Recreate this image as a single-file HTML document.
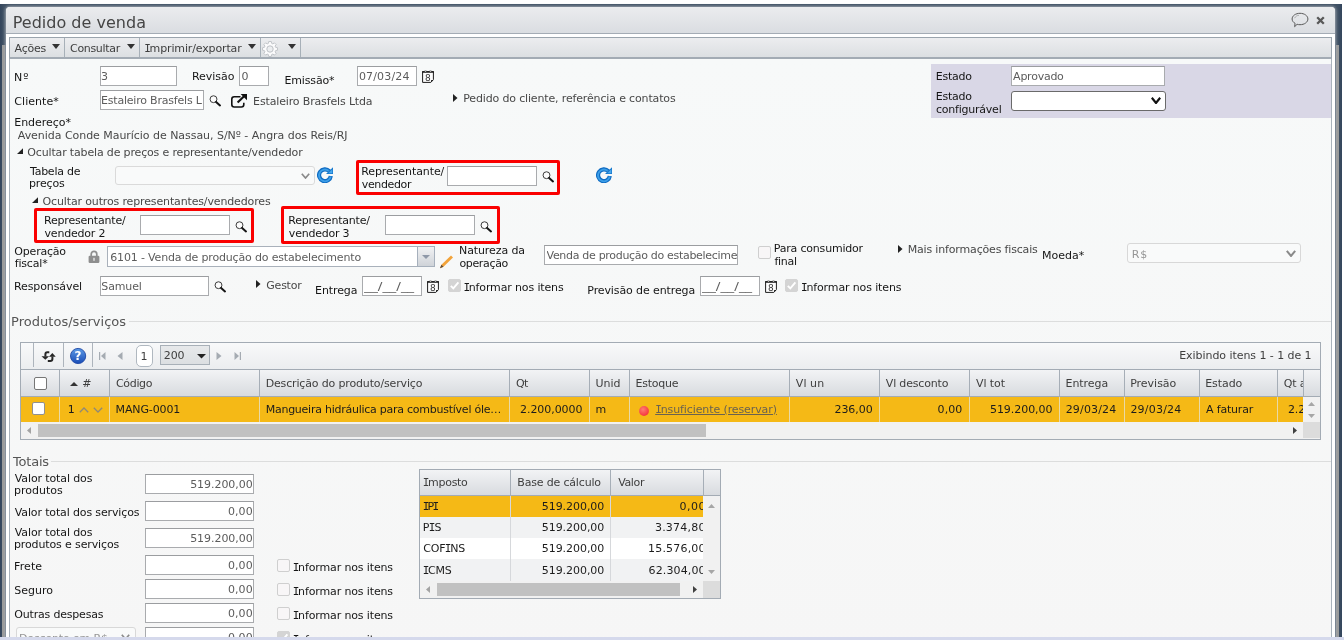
<!DOCTYPE html>
<html lang="pt-BR"><head><meta charset="utf-8"><title>Pedido de venda</title>
<style>
html,body{margin:0;padding:0}
body{width:1344px;height:640px;overflow:hidden;background:#fff;position:relative;font-family:"DejaVu Sans","Liberation Sans",sans-serif;font-size:11px;color:#111}
.abs,.l,.v,.i,.ic,.cb,.h,.c,.g,.sec,.ttl{position:absolute}
.l,.v,.h,.c,.g{white-space:nowrap;line-height:13px}
.l{color:#161616}.v{color:#484848}.h{color:#3e3e3e}.c{color:#1c1c1c}.g{color:#5c5c5c}
.i{background:#fff;border:1px solid #a9abae;border-top-color:#9b9da0}
.cb{border:1px solid #767676;border-radius:2px;background:#fff}
.sec{font-size:13px;line-height:16px;color:#555;white-space:nowrap}
.ttl{font-size:16px;line-height:20px;color:#454545;white-space:nowrap}
.ln{position:absolute;height:1px;background:#dcdddd}
.red{position:absolute;border:3px solid #fa0000;border-radius:2px}
.vs{position:absolute;width:1px}
.I{font-family:"DejaVu Sans Mono",monospace;margin:0 -1.1px 0 -1px}
</style></head><body><div id="root" style="position:absolute;left:0;top:0;width:1344px;height:640px;overflow:hidden;will-change:transform">

<div class="abs" style="left:0px;top:4px;width:1342px;height:633px;background:linear-gradient(90deg,#33455c,#3f5064 4px,#3f5064 1338px,#33455c)"></div>
<div class="abs" style="left:2px;top:45px;width:3px;height:592px;background:#9a9a9a"></div>
<div class="abs" style="left:5px;top:45px;width:1px;height:592px;background:#5b6b7b"></div>
<div class="abs" style="left:1336px;top:45px;width:3px;height:592px;background:#9a9a9a"></div>
<div class="abs" style="left:6px;top:7px;width:1329px;height:640px;background:#fff;border-radius:4px 4px 0 0;box-shadow:0 0 3px 1px rgba(165,172,180,.9)"></div>
<div class="abs" style="left:6px;top:7px;width:1329px;height:26px;border-radius:4px 4px 0 0;background:linear-gradient(#ebecee,#dadde1);border-bottom:1px solid #a4acb5"></div>
<div class="ttl" style="left:12.69px;top:13.00px;letter-spacing:0.015px;">Pedido de venda</div>
<svg class="ic" style="left:1291px;top:12px" width="18" height="16" viewBox="0 0 18 16"><path d="M9 1.300c4.400 0 7.900 2.500 7.900 5.700s-3.500 5.700-7.900 5.700c-1 0-2-0.100-2.900-0.400l-2.500 2.400 0.500-3.300c-1.800-1-3-2.600-3-4.400 0-3.200 3.500-5.700 7.900-5.700z" fill="none" stroke="#5a5a5a" stroke-width="1"/><path d="M3.600 6.200C4.400 4.300 6.200 3.400 8 3.300" fill="none" stroke="#8a8a8a" stroke-width="0.600"/></svg>
<svg class="ic" style="left:1316px;top:16px" width="9" height="9" viewBox="0 0 9 9"><path d="M1.200 1.200L7.800 7.800M7.800 1.200L1.200 7.800" stroke="#585858" stroke-width="2.300"/></svg>
<div class="abs" style="left:9px;top:37px;width:1321px;height:19px;border:1px solid #9aa4ad;border-bottom:2px solid #a3abb4;background:linear-gradient(#ecedef,#dcdfe2)"></div>
<div class="vs" style="left:64px;top:38px;height:19px;background:#a7b0b8"></div>
<div class="vs" style="left:139px;top:38px;height:19px;background:#a7b0b8"></div>
<div class="vs" style="left:260px;top:38px;height:19px;background:#a7b0b8"></div>
<div class="vs" style="left:300px;top:38px;height:19px;background:#a7b0b8"></div>
<div class="h" style="left:14.62px;top:41.69px;letter-spacing:-0.230px;">Ações</div>
<div class="h" style="left:70.06px;top:41.69px;letter-spacing:-0.322px;">Consultar</div>
<div class="h" style="left:145.20px;top:41.69px;letter-spacing:-0.138px;"><span class="I">I</span>mprimir/exportar</div>
<svg class="ic" style="left:52px;top:44px" width="8" height="5" viewBox="0 0 8 5"><path d="M0 0h8L4.0 5z" fill="#333"/></svg>
<svg class="ic" style="left:127px;top:44px" width="8" height="5" viewBox="0 0 8 5"><path d="M0 0h8L4.0 5z" fill="#333"/></svg>
<svg class="ic" style="left:248px;top:44px" width="8" height="5" viewBox="0 0 8 5"><path d="M0 0h8L4.0 5z" fill="#333"/></svg>
<svg class="ic" style="left:288px;top:44px" width="8" height="5" viewBox="0 0 8 5"><path d="M0 0h8L4.0 5z" fill="#333"/></svg>
<svg class="ic" style="left:262px;top:41px" width="16" height="16" viewBox="0 0 16 16"><g fill="#fbfbfc" stroke="#b9bcc1" stroke-width="0.900"><path d="M6.700 0.800h2.600l0.400 2 1.300 0.600 1.700-1.100 1.800 1.800-1.100 1.700 0.600 1.300 2 0.400v2.600l-2 0.400-0.600 1.300 1.100 1.700-1.800 1.800-1.700-1.100-1.300 0.600-0.400 2h-2.600l-0.400-2-1.300-0.600-1.700 1.100-1.800-1.800 1.100-1.700-0.600-1.300-2-0.400v-2.600l2-0.400 0.600-1.300-1.100-1.700 1.800-1.800 1.700 1.100 1.300-0.600z" transform="translate(0.500 -0.300) scale(0.940)"/><circle cx="8" cy="8" r="3.200" fill="#eceef0"/></g></svg>
<div class="abs" style="left:9px;top:59px;width:1321px;height:590px;border-left:1px solid #a9b2bb;border-right:1px solid #a9b2bb;background:linear-gradient(#f7f9f9,#f6f6f6)"></div>
<div class="l" style="left:14.00px;top:70.69px;letter-spacing:1.096px;">Nº</div>
<div class="i" style="left:100px;top:66px;width:75px;height:18px;"></div>
<div class="g" style="left:101.02px;top:69.69px;letter-spacing:-0.150px;max-width:74.98px;overflow:hidden;">3</div>
<div class="l" style="left:192.00px;top:69.69px;letter-spacing:-0.033px;">Revisão</div>
<div class="i" style="left:239px;top:66px;width:28px;height:18px;"></div>
<div class="g" style="left:241.58px;top:69.69px;letter-spacing:-0.150px;max-width:26.42px;overflow:hidden;">0</div>
<div class="l" style="left:284.50px;top:73.69px;letter-spacing:-0.153px;">Emissão*</div>
<div class="i" style="left:357px;top:66px;width:58px;height:18px;"></div>
<div class="g" style="left:358.97px;top:69.69px;letter-spacing:0.147px;max-width:57.03px;overflow:hidden;">07/03/24</div>
<svg class="ic" style="left:422px;top:70px" width="12" height="13" viewBox="0 0 12 13"><path d="M0.600 1.700H11.400V9.600L8.800 12.400H0.600z" fill="#fdfdfd" stroke="#1c1c1c" stroke-width="1"/><rect x="0.100" y="1.200" width="11.800" height="1.500" fill="#1c1c1c"/><circle cx="3.500" cy="1.100" r="0.850" fill="#fff" stroke="#1c1c1c" stroke-width="0.350"/><circle cx="8.500" cy="1.100" r="0.850" fill="#fff" stroke="#1c1c1c" stroke-width="0.350"/><path d="M11.400 9.900H9.100V12.200z" fill="#1c1c1c"/><text x="5.900" y="10.700" font-size="9" text-anchor="middle" font-family="DejaVu Sans,sans-serif" fill="#333">8</text></svg>
<div class="l" style="left:14.36px;top:94.69px;letter-spacing:0.033px;">Cliente*</div>
<div class="i" style="left:100px;top:90px;width:102px;height:18px;"></div>
<div class="g" style="left:101.00px;top:93.69px;letter-spacing:-0.203px;max-width:101.20px;overflow:hidden;">Estaleiro Brasfels Ltda</div>
<svg class="ic" style="left:209.4px;top:95.1px" width="13" height="12" viewBox="0 0 13 12"><circle cx="4.500" cy="4.200" r="3.450" fill="#fcfcfc" stroke="#3a3a3a" stroke-width="1"/><path d="M7.100 6.900L11 10.400" stroke="#151515" stroke-width="2" stroke-linecap="round"/></svg>
<svg class="ic" style="left:230px;top:93px" width="18" height="15" viewBox="0 0 18 15"><path d="M10.500 3.800H4.200a2.400 2.400 0 0 0-2.400 2.400v5.400a2.400 2.400 0 0 0 2.400 2.400h7.200a2.400 2.400 0 0 0 2.400-2.400V9.800" fill="none" stroke="#111" stroke-width="1.600"/><path d="M7.600 9.400L14.800 2.400" stroke="#111" stroke-width="2.100"/><path d="M10.600 0.900h6.400v6.400z" fill="#111"/></svg>
<div class="v" style="left:253.10px;top:94.69px;letter-spacing:-0.147px;">Estaleiro Brasfels Ltda</div>
<svg class="ic" style="left:453px;top:94px" width="5" height="8" viewBox="0 0 5 8"><path d="M0 0L4.500 4L0 8z" fill="#222"/></svg>
<div class="v" style="left:463.20px;top:91.69px;letter-spacing:-0.151px;">Pedido do cliente, referência e contatos</div>
<div class="abs" style="left:931px;top:64px;width:400px;height:54px;background:#d9d7e6"></div>
<div class="l" style="left:935.70px;top:69.69px;letter-spacing:-0.223px;">Estado</div>
<div class="i" style="left:1011px;top:66px;width:152px;height:18px;"></div>
<div class="g" style="left:1013.12px;top:69.69px;letter-spacing:-0.248px;max-width:150.88px;overflow:hidden;">Aprovado</div>
<div class="l" style="left:935.70px;top:89.69px;letter-spacing:-0.223px;">Estado</div>
<div class="l" style="left:936.07px;top:102.69px;letter-spacing:-0.236px;">configurável</div>
<div class="abs" style="left:1011px;top:91px;width:153px;height:18px;border:1px solid #6a6a6a;border-radius:3px;background:#fff"></div>
<svg class="ic" style="left:1151px;top:97px" width="10" height="7" viewBox="0 0 10 7"><path d="M0.800 0.800L5.0 6L9.2 0.800" fill="none" stroke="#111" stroke-width="2.2"/></svg>
<div class="l" style="left:14.20px;top:115.69px;letter-spacing:-0.012px;">Endereço*</div>
<div class="v" style="left:17.82px;top:128.69px;letter-spacing:-0.041px;">Avenida Conde Maurício de Nassau, S/Nº - Angra dos Reis/RJ</div>
<svg class="ic" style="left:17px;top:148.1px" width="6.3" height="6" viewBox="0 0 6.3 6"><path d="M6.300 0V6H0z" fill="#222"/></svg>
<div class="v" style="left:27.35px;top:145.69px;letter-spacing:-0.161px;">Ocultar tabela de preços e representante/vendedor</div>
<div class="l" style="left:30.00px;top:164.69px;letter-spacing:-0.250px;">Tabela de</div>
<div class="l" style="left:29.00px;top:176.69px;letter-spacing:-0.150px;">preços</div>
<div class="abs" style="left:115px;top:166px;width:198px;height:17px;border:1px solid #dadada;border-radius:3px;background:#f9fafa"></div>
<svg class="ic" style="left:301px;top:173px" width="9" height="6" viewBox="0 0 9 6"><path d="M0.800 0.800L4.5 5L8.2 0.800" fill="none" stroke="#8a8a8a" stroke-width="1.7"/></svg>
<svg class="ic" style="left:317px;top:167px" width="16" height="16" viewBox="0 0 16 16"><path d="M13.840 9.020A5.900 5.900 0 1 1 12.300 4.150" fill="none" stroke="#0f6cc3" stroke-width="4.200"/><path d="M13.700 9.500A5.900 5.900 0 1 1 11.600 3.800" fill="none" stroke="#3d9fe8" stroke-width="1.800"/><path d="M16 0.200V6.900H9z" fill="#1577cc"/><path d="M15.300 2.200V6.200H11.200z" fill="#49a8ec"/></svg>
<div class="red" style="left:356px;top:160px;width:198px;height:29px"></div>
<div class="l" style="left:361.20px;top:164.69px;letter-spacing:-0.088px;">Representante/</div>
<div class="l" style="left:361.76px;top:177.69px;letter-spacing:-0.364px;">vendedor</div>
<div class="i" style="left:447px;top:166px;width:88px;height:18px;"></div>
<svg class="ic" style="left:542.4px;top:171.2px" width="13" height="12" viewBox="0 0 13 12"><circle cx="4.500" cy="4.200" r="3.450" fill="#fcfcfc" stroke="#3a3a3a" stroke-width="1"/><path d="M7.100 6.900L11 10.400" stroke="#151515" stroke-width="2" stroke-linecap="round"/></svg>
<svg class="ic" style="left:596px;top:167px" width="16" height="16" viewBox="0 0 16 16"><path d="M13.840 9.020A5.900 5.900 0 1 1 12.300 4.150" fill="none" stroke="#0f6cc3" stroke-width="4.200"/><path d="M13.700 9.500A5.900 5.900 0 1 1 11.600 3.800" fill="none" stroke="#3d9fe8" stroke-width="1.800"/><path d="M16 0.200V6.900H9z" fill="#1577cc"/><path d="M15.300 2.200V6.200H11.200z" fill="#49a8ec"/></svg>
<svg class="ic" style="left:31.9px;top:197.4px" width="6.3" height="6" viewBox="0 0 6.3 6"><path d="M6.300 0V6H0z" fill="#222"/></svg>
<div class="v" style="left:42.55px;top:194.69px;letter-spacing:-0.142px;">Ocultar outros representantes/vendedores</div>
<div class="red" style="left:34px;top:208px;width:214px;height:29px"></div>
<div class="l" style="left:44.00px;top:213.69px;letter-spacing:-0.195px;">Representante/</div>
<div class="l" style="left:44.56px;top:226.69px;letter-spacing:-0.200px;">vendedor 2</div>
<div class="i" style="left:140px;top:215px;width:88px;height:18px;"></div>
<svg class="ic" style="left:235.4px;top:220.6px" width="13" height="12" viewBox="0 0 13 12"><circle cx="4.500" cy="4.200" r="3.450" fill="#fcfcfc" stroke="#3a3a3a" stroke-width="1"/><path d="M7.100 6.900L11 10.400" stroke="#151515" stroke-width="2" stroke-linecap="round"/></svg>
<div class="red" style="left:281px;top:206px;width:213px;height:32px"></div>
<div class="l" style="left:288.30px;top:213.69px;letter-spacing:-0.195px;">Representante/</div>
<div class="l" style="left:288.86px;top:226.69px;letter-spacing:-0.223px;">vendedor 3</div>
<div class="i" style="left:385px;top:215px;width:88px;height:18px;"></div>
<svg class="ic" style="left:480.4px;top:220.5px" width="13" height="12" viewBox="0 0 13 12"><circle cx="4.500" cy="4.200" r="3.450" fill="#fcfcfc" stroke="#3a3a3a" stroke-width="1"/><path d="M7.100 6.900L11 10.400" stroke="#151515" stroke-width="2" stroke-linecap="round"/></svg>
<div class="l" style="left:14.36px;top:244.69px;letter-spacing:-0.214px;">Operação</div>
<div class="l" style="left:14.66px;top:256.69px;letter-spacing:-0.150px;">fiscal*</div>
<svg class="ic" style="left:88px;top:250px" width="12" height="13" viewBox="0 0 12 13"><path d="M3.200 6V4.200a2.800 2.800 0 0 1 5.600 0V6" fill="none" stroke="#8e8e8e" stroke-width="1.700"/><rect x="0.600" y="5.800" width="10.800" height="7.200" rx="1.200" fill="#8e8e8e"/><rect x="5.300" y="7.800" width="1.400" height="3" fill="#e6e6e6"/></svg>
<div class="i" style="left:107px;top:246px;width:326px;height:19px;border-color:#a9b1bb"></div>
<div class="g" style="left:110.21px;top:250.69px;letter-spacing:-0.162px;">6101 - Venda de produção do estabelecimento</div>
<div class="abs" style="left:417px;top:246px;width:16px;height:19px;border:1px solid #a6b0bc;background:linear-gradient(#f1f2f4,#cfd3d8)"></div>
<svg class="ic" style="left:422px;top:255.2px" width="8" height="4" viewBox="0 0 8 4"><path d="M0 0h8L4.0 4z" fill="#8e98a8"/></svg>
<svg class="ic" style="left:439px;top:254px" width="15" height="15" viewBox="0 0 15 15"><path d="M1 14.200L2.400 10.700L12 1.500L14 3.500L4.500 12.800z" fill="#f2a33a"/><path d="M1 14.200L2.400 10.700L4.500 12.800z" fill="#5a4a3a"/></svg>
<div class="l" style="left:459.00px;top:243.69px;letter-spacing:-0.100px;">Natureza da</div>
<div class="l" style="left:459.38px;top:256.69px;letter-spacing:-0.332px;">operação</div>
<div class="i" style="left:544px;top:245px;width:192px;height:18px;"></div>
<div class="g" style="left:546.52px;top:248.69px;letter-spacing:-0.307px;max-width:190.48px;overflow:hidden;">Venda de produção do estabelecimento</div>
<div class="cb" style="left:758px;top:246px;width:11px;height:11px;background:#f8f6f7;border-color:#cfcfcf"></div>
<div class="l" style="left:773.80px;top:241.69px;letter-spacing:-0.199px;">Para consumidor</div>
<div class="l" style="left:774.45px;top:254.69px;letter-spacing:-0.285px;">final</div>
<svg class="ic" style="left:898px;top:245px" width="5" height="8" viewBox="0 0 5 8"><path d="M0 0L4.500 4L0 8z" fill="#222"/></svg>
<div class="v" style="left:907.70px;top:242.69px;letter-spacing:-0.166px;">Mais informações fiscais</div>
<div class="l" style="left:1041.90px;top:248.69px;letter-spacing:0.046px;">Moeda*</div>
<div class="abs" style="left:1127px;top:243px;width:172px;height:18px;border:1px solid #d8d8d8;border-radius:3px;background:#f9fafa"></div>
<div class="v" style="left:1131.80px;top:247.69px;letter-spacing:0.788px;color:#969696">R$</div>
<svg class="ic" style="left:1286px;top:250px" width="10" height="7" viewBox="0 0 10 7"><path d="M0.800 0.800L5.0 6L9.2 0.800" fill="none" stroke="#8a8a8a" stroke-width="2"/></svg>
<div class="l" style="left:14.00px;top:279.69px;letter-spacing:-0.100px;">Responsável</div>
<div class="i" style="left:100px;top:276px;width:107px;height:18px;"></div>
<div class="g" style="left:101.37px;top:279.69px;letter-spacing:-0.150px;max-width:106.63px;overflow:hidden;">Samuel</div>
<svg class="ic" style="left:214.3px;top:281.2px" width="13" height="12" viewBox="0 0 13 12"><circle cx="4.500" cy="4.200" r="3.450" fill="#fcfcfc" stroke="#3a3a3a" stroke-width="1"/><path d="M7.100 6.900L11 10.400" stroke="#151515" stroke-width="2" stroke-linecap="round"/></svg>
<svg class="ic" style="left:255.8px;top:280.1px" width="5" height="8" viewBox="0 0 5 8"><path d="M0 0L4.500 4L0 8z" fill="#222"/></svg>
<div class="v" style="left:266.35px;top:278.69px;letter-spacing:-0.250px;">Gestor</div>
<div class="l" style="left:315.10px;top:283.69px;letter-spacing:-0.117px;">Entrega</div>
<div class="i" style="left:362px;top:276px;width:58px;height:18px;"></div>
<div class="g" style="left:364.20px;top:279.69px;letter-spacing:0.000px;max-width:56.80px;overflow:hidden;transform:scaleX(1.2550);transform-origin:0 0;">__/__/__</div>
<svg class="ic" style="left:427px;top:280px" width="12" height="13" viewBox="0 0 12 13"><path d="M0.600 1.700H11.400V9.600L8.800 12.400H0.600z" fill="#fdfdfd" stroke="#1c1c1c" stroke-width="1"/><rect x="0.100" y="1.200" width="11.800" height="1.500" fill="#1c1c1c"/><circle cx="3.500" cy="1.100" r="0.850" fill="#fff" stroke="#1c1c1c" stroke-width="0.350"/><circle cx="8.500" cy="1.100" r="0.850" fill="#fff" stroke="#1c1c1c" stroke-width="0.350"/><path d="M11.400 9.900H9.100V12.200z" fill="#1c1c1c"/><text x="5.900" y="10.700" font-size="9" text-anchor="middle" font-family="DejaVu Sans,sans-serif" fill="#333">8</text></svg>
<div class="cb" style="left:448px;top:279px;width:11px;height:11px;background:#d4d4d4;border-color:#d4d4d4"><svg width="13" height="13" viewBox="0 0 12 12" style="position:absolute;left:-1px;top:-1px"><path d="M2.600 6.300L4.900 8.600L9.600 3.200" fill="none" stroke="#fff" stroke-width="1.800"/></svg></div>
<div class="l" style="left:464.40px;top:280.69px;letter-spacing:-0.141px;"><span class="I">I</span>nformar nos itens</div>
<div class="l" style="left:587.30px;top:283.69px;letter-spacing:-0.108px;">Previsão de entrega</div>
<div class="i" style="left:700px;top:276px;width:58px;height:18px;"></div>
<div class="g" style="left:702.20px;top:279.69px;letter-spacing:0.000px;max-width:56.80px;overflow:hidden;transform:scaleX(1.2550);transform-origin:0 0;">__/__/__</div>
<svg class="ic" style="left:765px;top:280px" width="12" height="13" viewBox="0 0 12 13"><path d="M0.600 1.700H11.400V9.600L8.800 12.400H0.600z" fill="#fdfdfd" stroke="#1c1c1c" stroke-width="1"/><rect x="0.100" y="1.200" width="11.800" height="1.500" fill="#1c1c1c"/><circle cx="3.500" cy="1.100" r="0.850" fill="#fff" stroke="#1c1c1c" stroke-width="0.350"/><circle cx="8.500" cy="1.100" r="0.850" fill="#fff" stroke="#1c1c1c" stroke-width="0.350"/><path d="M11.400 9.900H9.100V12.200z" fill="#1c1c1c"/><text x="5.900" y="10.700" font-size="9" text-anchor="middle" font-family="DejaVu Sans,sans-serif" fill="#333">8</text></svg>
<div class="cb" style="left:785px;top:279px;width:11px;height:11px;background:#d4d4d4;border-color:#d4d4d4"><svg width="13" height="13" viewBox="0 0 12 12" style="position:absolute;left:-1px;top:-1px"><path d="M2.600 6.300L4.900 8.600L9.600 3.200" fill="none" stroke="#fff" stroke-width="1.800"/></svg></div>
<div class="l" style="left:802.00px;top:280.69px;letter-spacing:-0.129px;"><span class="I">I</span>nformar nos itens</div>
<div class="sec" style="left:11.03px;top:313.50px;letter-spacing:0.031px;">Produtos/serviços</div>
<div class="ln" style="left:129px;top:321px;width:1202px"></div>
<div class="abs" style="left:20px;top:342px;width:1301px;height:98px;box-sizing:border-box;border:1px solid #a3abb4;background:#f1f1f1"></div>
<div class="abs" style="left:21px;top:343px;width:1299px;height:26px;background:linear-gradient(#f8f9fa,#ebedef)"></div>
<div class="vs" style="left:33px;top:343px;height:24px;background:#adb4bc"></div>
<div class="vs" style="left:63px;top:343px;height:24px;background:#adb4bc"></div>
<div class="vs" style="left:92px;top:343px;height:24px;background:#adb4bc"></div>
<svg class="ic" style="left:40.500px;top:350.500px" width="15" height="11" viewBox="0 0 15 11"><path d="M8.300 1.300H6.300Q4.400 1.300 4.400 3.200V5.600" fill="none" stroke="#262626" stroke-width="2"/><path d="M0.500 5.200H8.100L4.300 8.700z" fill="#262626"/><path d="M6.800 9.900H9.200Q11.400 9.900 11.400 8V5.600" fill="none" stroke="#262626" stroke-width="2"/><path d="M7.900 5.700H14.700L11.400 2.100z" fill="#262626"/></svg>
<svg class="ic" style="left:69px;top:347px" width="18" height="18" viewBox="0 0 18 18"><defs><linearGradient id="hg" x1="0" y1="0" x2="0" y2="1"><stop offset="0" stop-color="#5b9ae6"/><stop offset="1" stop-color="#1a4cb6"/></linearGradient></defs><circle cx="9.100" cy="9" r="7.600" fill="url(#hg)" stroke="#1d47a6" stroke-width="0.900"/><text x="9" y="13.200" font-size="12" font-weight="bold" text-anchor="middle" font-family="DejaVu Sans,sans-serif" fill="#fff">?</text></svg>
<svg class="ic" style="left:99px;top:352px" width="7" height="8" viewBox="0 0 7 8"><path d="M0.600 0v8" stroke="#a5abb2" stroke-width="1.200"/><path d="M6.500 0L2 4L6.500 8z" fill="#a5abb2"/></svg>
<svg class="ic" style="left:117px;top:352px" width="6" height="8" viewBox="0 0 6 8"><path d="M5.500 0L0.500 4L5.500 8z" fill="#a5abb2"/></svg>
<div class="abs" style="left:136px;top:345px;width:15px;height:20px;border:1px solid #b0b8c0;border-radius:5px;background:#fff"></div>
<div class="h" style="left:140.54px;top:349.69px;letter-spacing:-0.150px;">1</div>
<div class="abs" style="left:160px;top:345px;width:48px;height:18px;border:1px solid #a8b0b8;background:linear-gradient(#e7e9eb,#dcdfe2)"></div>
<div class="h" style="left:163.72px;top:348.69px;letter-spacing:-0.085px;">200</div>
<svg class="ic" style="left:196.5px;top:354px" width="9" height="4.5" viewBox="0 0 9 4.5"><path d="M0 0h9L4.5 4.5z" fill="#222"/></svg>
<svg class="ic" style="left:216px;top:352px" width="6" height="8" viewBox="0 0 6 8"><path d="M0.500 0L5.500 4L0.500 8z" fill="#a5abb2"/></svg>
<svg class="ic" style="left:234px;top:352px" width="7" height="8" viewBox="0 0 7 8"><path d="M6.400 0v8" stroke="#a5abb2" stroke-width="1.200"/><path d="M0.500 0L5 4L0.500 8z" fill="#a5abb2"/></svg>
<div class="h" style="left:1179.20px;top:348.69px;letter-spacing:-0.056px;">Exibindo itens 1 - 1 de 1</div>
<div class="abs" style="left:21px;top:369px;width:1299px;height:28px;box-sizing:border-box;background:linear-gradient(#f2f3f5,#d8dbdf);border-top:1px solid #a3abb4;border-bottom:1px solid #a3abb4"></div>
<div class="abs" style="left:21px;top:397px;width:1282px;height:25px;background:#f5b916"></div>
<div class="vs" style="left:59px;top:370px;height:26px;background:#a6aeb7"></div>
<div class="vs" style="left:109px;top:370px;height:26px;background:#a6aeb7"></div>
<div class="vs" style="left:259px;top:370px;height:26px;background:#a6aeb7"></div>
<div class="vs" style="left:509px;top:370px;height:26px;background:#a6aeb7"></div>
<div class="vs" style="left:589px;top:370px;height:26px;background:#a6aeb7"></div>
<div class="vs" style="left:629px;top:370px;height:26px;background:#a6aeb7"></div>
<div class="vs" style="left:789px;top:370px;height:26px;background:#a6aeb7"></div>
<div class="vs" style="left:879px;top:370px;height:26px;background:#a6aeb7"></div>
<div class="vs" style="left:969px;top:370px;height:26px;background:#a6aeb7"></div>
<div class="vs" style="left:1059px;top:370px;height:26px;background:#a6aeb7"></div>
<div class="vs" style="left:1124px;top:370px;height:26px;background:#a6aeb7"></div>
<div class="vs" style="left:1199px;top:370px;height:26px;background:#a6aeb7"></div>
<div class="vs" style="left:1277px;top:370px;height:26px;background:#a6aeb7"></div>
<div class="vs" style="left:1303px;top:370px;height:26px;background:#a6aeb7"></div>
<div class="vs" style="left:59px;top:397px;height:25px;background:#e9d9a6"></div>
<div class="vs" style="left:109px;top:397px;height:25px;background:#e9d9a6"></div>
<div class="vs" style="left:259px;top:397px;height:25px;background:#e9d9a6"></div>
<div class="vs" style="left:509px;top:397px;height:25px;background:#e9d9a6"></div>
<div class="vs" style="left:589px;top:397px;height:25px;background:#e9d9a6"></div>
<div class="vs" style="left:629px;top:397px;height:25px;background:#e9d9a6"></div>
<div class="vs" style="left:789px;top:397px;height:25px;background:#e9d9a6"></div>
<div class="vs" style="left:879px;top:397px;height:25px;background:#e9d9a6"></div>
<div class="vs" style="left:969px;top:397px;height:25px;background:#e9d9a6"></div>
<div class="vs" style="left:1059px;top:397px;height:25px;background:#e9d9a6"></div>
<div class="vs" style="left:1124px;top:397px;height:25px;background:#e9d9a6"></div>
<div class="vs" style="left:1199px;top:397px;height:25px;background:#e9d9a6"></div>
<div class="vs" style="left:1277px;top:397px;height:25px;background:#e9d9a6"></div>
<div class="cb" style="left:34px;top:377px;width:11px;height:11px;background:#fff;border-color:#767676"></div>
<svg class="ic" style="left:70px;top:382px" width="8" height="4" viewBox="0 0 8 4"><path d="M0 4h8L4 0z" fill="#333"/></svg>
<div class="h" style="left:82.28px;top:376.69px;letter-spacing:-0.150px;">#</div>
<div class="h" style="left:115.96px;top:376.69px;letter-spacing:-0.323px;">Código</div>
<div class="h" style="left:265.70px;top:376.69px;letter-spacing:-0.154px;">Descrição do produto/serviço</div>
<div class="h" style="left:516.06px;top:376.69px;letter-spacing:-0.663px;">Qt</div>
<div class="h" style="left:595.50px;top:376.69px;letter-spacing:-0.033px;">Unid</div>
<div class="h" style="left:635.50px;top:376.69px;letter-spacing:-0.233px;">Estoque</div>
<div class="h" style="left:795.82px;top:376.69px;letter-spacing:0.070px;">Vl un</div>
<div class="h" style="left:885.84px;top:376.69px;letter-spacing:-0.178px;">Vl desconto</div>
<div class="h" style="left:976.02px;top:376.69px;letter-spacing:-0.097px;">Vl tot</div>
<div class="h" style="left:1065.50px;top:376.69px;letter-spacing:-0.050px;">Entrega</div>
<div class="h" style="left:1130.20px;top:376.69px;letter-spacing:-0.019px;">Previsão</div>
<div class="h" style="left:1205.20px;top:376.69px;letter-spacing:-0.063px;">Estado</div>
<div class="h" style="left:1283.66px;top:376.69px;letter-spacing:-0.150px;max-width:19.34px;overflow:hidden;">Qt a</div>
<div class="cb" style="left:32px;top:402px;width:11px;height:11px;background:#fff;border-color:#909090"></div>
<div class="c" style="left:67.64px;top:402.69px;letter-spacing:-0.150px;">1</div>
<svg class="ic" style="left:78.500px;top:407px" width="10" height="6" viewBox="0 0 10 6"><path d="M0.800 5.200L5 1L9.200 5.200" fill="none" stroke="#8f8877" stroke-width="1.300"/></svg>
<svg class="ic" style="left:92.500px;top:407px" width="10" height="6" viewBox="0 0 10 6"><path d="M0.800 0.800L5 5L9.200 0.800" fill="none" stroke="#8f8877" stroke-width="1.300"/></svg>
<div class="c" style="left:115.60px;top:402.69px;letter-spacing:-0.131px;">MANG-0001</div>
<div class="c" style="left:265.70px;top:402.69px;letter-spacing:-0.250px;">Mangueira hidráulica para combustível óle…</div>
<div class="c" style="left:520.02px;top:402.69px;letter-spacing:-0.063px;">2.200,0000</div>
<div class="c" style="left:595.50px;top:402.69px;letter-spacing:-0.150px;">m</div>
<svg class="ic" style="left:639px;top:406px" width="10" height="10" viewBox="0 0 10 10"><defs><radialGradient id="rg" cx="0.400" cy="0.350" r="0.700"><stop offset="0" stop-color="#ff7b72"/><stop offset="1" stop-color="#f5333a"/></radialGradient></defs><circle cx="5" cy="5" r="4.900" fill="url(#rg)"/></svg>
<div class="c" style="left:656.20px;top:402.69px;letter-spacing:-0.100px;text-decoration:underline;color:#6a6250;"><span class="I">I</span>nsuficiente (reservar)</div>
<div class="c" style="left:834.42px;top:402.69px;letter-spacing:-0.028px;">236,00</div>
<div class="c" style="left:937.58px;top:402.69px;letter-spacing:0.090px;">0,00</div>
<div class="c" style="left:989.94px;top:402.69px;letter-spacing:-0.044px;">519.200,00</div>
<div class="c" style="left:1065.72px;top:402.69px;letter-spacing:0.154px;">29/03/24</div>
<div class="c" style="left:1130.42px;top:402.69px;letter-spacing:0.211px;">29/03/24</div>
<div class="c" style="left:1206.02px;top:402.69px;letter-spacing:-0.178px;">A faturar</div>
<div class="c" style="left:1288.02px;top:402.69px;letter-spacing:-0.150px;max-width:14.98px;overflow:hidden;">2.200,0000</div>
<div class="abs" style="left:1304px;top:397px;width:16px;height:25px;background:#f1f1f1"></div>
<svg class="ic" style="left:1308px;top:402px" width="7" height="4" viewBox="0 0 7 4"><path d="M0 4h7L3.500 0z" fill="#a6a6a6"/></svg>
<svg class="ic" style="left:1308px;top:414px" width="7" height="4" viewBox="0 0 7 4"><path d="M0 0h7L3.500 4z" fill="#a6a6a6"/></svg>
<div class="abs" style="left:21px;top:422px;width:1282px;height:16px;background:#f1f1f1"></div>
<div class="abs" style="left:1303px;top:422px;width:17px;height:16px;background:#dcdcdc"></div>
<div class="abs" style="left:38px;top:424px;width:668px;height:13px;background:#c1c1c1"></div>
<svg class="ic" style="left:27px;top:427px" width="4" height="7" viewBox="0 0 4 7"><path d="M4 0V7L0 3.500z" fill="#a3a3a3"/></svg>
<svg class="ic" style="left:1293px;top:427px" width="4" height="7" viewBox="0 0 4 7"><path d="M0 0V7L4 3.500z" fill="#404040"/></svg>
<div class="sec" style="left:13.00px;top:453.50px;letter-spacing:-0.203px;">Totais</div>
<div class="ln" style="left:51px;top:461px;width:1280px"></div>
<div class="l" style="left:14.84px;top:471.69px;letter-spacing:-0.125px;">Valor total dos</div>
<div class="l" style="left:14.00px;top:483.69px;letter-spacing:-0.014px;">produtos</div>
<div class="i" style="left:145px;top:474px;width:107px;height:18px;"></div>
<div class="g" style="left:190.14px;top:477.69px;letter-spacing:-0.044px;">519.200,00</div>
<div class="l" style="left:14.84px;top:505.69px;letter-spacing:-0.142px;">Valor total dos serviços</div>
<div class="i" style="left:145px;top:501px;width:107px;height:18px;"></div>
<div class="g" style="left:227.98px;top:504.69px;letter-spacing:0.057px;">0,00</div>
<div class="l" style="left:14.84px;top:525.69px;letter-spacing:-0.125px;">Valor total dos</div>
<div class="l" style="left:14.00px;top:537.69px;letter-spacing:-0.127px;">produtos e serviços</div>
<div class="i" style="left:145px;top:528px;width:107px;height:18px;"></div>
<div class="g" style="left:190.14px;top:531.69px;letter-spacing:-0.044px;">519.200,00</div>
<div class="l" style="left:14.00px;top:559.69px;letter-spacing:0.103px;">Frete</div>
<div class="i" style="left:145px;top:555px;width:107px;height:18px;"></div>
<div class="g" style="left:227.98px;top:558.69px;letter-spacing:0.057px;">0,00</div>
<div class="cb" style="left:277px;top:559px;width:11px;height:11px;background:#f8f6f7;border-color:#cfcfcf"></div>
<div class="l" style="left:293.70px;top:560.69px;letter-spacing:-0.135px;"><span class="I">I</span>nformar nos itens</div>
<div class="l" style="left:14.27px;top:583.69px;letter-spacing:-0.013px;">Seguro</div>
<div class="i" style="left:145px;top:579px;width:107px;height:18px;"></div>
<div class="g" style="left:227.98px;top:582.69px;letter-spacing:0.057px;">0,00</div>
<div class="cb" style="left:277px;top:583px;width:11px;height:11px;background:#f8f6f7;border-color:#cfcfcf"></div>
<div class="l" style="left:293.70px;top:584.69px;letter-spacing:-0.135px;"><span class="I">I</span>nformar nos itens</div>
<div class="l" style="left:14.35px;top:607.69px;letter-spacing:-0.198px;">Outras despesas</div>
<div class="i" style="left:145px;top:603px;width:107px;height:18px;"></div>
<div class="g" style="left:227.98px;top:606.69px;letter-spacing:0.057px;">0,00</div>
<div class="cb" style="left:277px;top:607px;width:11px;height:11px;background:#f8f6f7;border-color:#cfcfcf"></div>
<div class="l" style="left:293.70px;top:608.69px;letter-spacing:-0.135px;"><span class="I">I</span>nformar nos itens</div>
<div class="abs" style="left:16px;top:627px;width:118px;height:18px;border:1px solid #d8d8d8;border-radius:3px;background:#f9fafa"></div>
<div class="v" style="left:19.00px;top:631.69px;letter-spacing:-0.150px;color:#969696;">Desconto em R$</div>
<svg class="ic" style="left:121px;top:634px" width="9" height="6" viewBox="0 0 9 6"><path d="M0.800 0.800L4.5 5L8.2 0.800" fill="none" stroke="#8a8a8a" stroke-width="1.7"/></svg>
<div class="i" style="left:145px;top:627px;width:107px;height:18px;"></div>
<div class="g" style="left:227.98px;top:630.69px;letter-spacing:0.057px;">0,00</div>
<div class="cb" style="left:277px;top:631px;width:11px;height:11px;background:#d4d4d4;border-color:#d4d4d4"><svg width="13" height="13" viewBox="0 0 12 12" style="position:absolute;left:-1px;top:-1px"><path d="M2.600 6.300L4.900 8.600L9.600 3.200" fill="none" stroke="#fff" stroke-width="1.800"/></svg></div>
<div class="l" style="left:293.70px;top:632.69px;letter-spacing:-0.135px;"><span class="I">I</span>nformar nos itens</div>
<div class="abs" style="left:419px;top:469px;width:302px;height:130px;box-sizing:border-box;border:1px solid #a3abb4;background:#f1f1f1"></div>
<div class="abs" style="left:420px;top:470px;width:300px;height:26px;box-sizing:border-box;background:linear-gradient(#f2f3f5,#d8dbdf);border-bottom:1px solid #a3abb4"></div>
<div class="abs" style="left:420px;top:496px;width:283px;height:21px;background:#f5b916"></div>
<div class="abs" style="left:420px;top:517px;width:283px;height:21px;background:#f1f2f3"></div>
<div class="abs" style="left:420px;top:538px;width:283px;height:21px;background:#ffffff"></div>
<div class="abs" style="left:420px;top:559px;width:283px;height:22px;background:#f1f2f3"></div>
<div class="vs" style="left:510px;top:470px;height:26px;background:#a6aeb7"></div>
<div class="vs" style="left:610px;top:470px;height:26px;background:#a6aeb7"></div>
<div class="vs" style="left:703px;top:470px;height:26px;background:#a6aeb7"></div>
<div class="vs" style="left:510px;top:496px;height:85px;background:#d6d8db"></div>
<div class="vs" style="left:610px;top:496px;height:85px;background:#d6d8db"></div>
<div class="c" style="left:423.80px;top:499.69px;letter-spacing:-0.798px;"><span class="I">I</span>P<span class="I">I</span></div>
<div class="c" style="left:541.74px;top:499.69px;letter-spacing:-0.044px;">519.200,00</div>
<div class="c" style="left:679.48px;top:499.69px;letter-spacing:0.490px;max-width:23.52px;overflow:hidden;">0,00</div>
<div class="c" style="left:422.80px;top:520.69px;letter-spacing:0.279px;">P<span class="I">I</span>S</div>
<div class="c" style="left:541.74px;top:520.69px;letter-spacing:-0.044px;">519.200,00</div>
<div class="c" style="left:654.92px;top:520.69px;letter-spacing:0.233px;max-width:48.08px;overflow:hidden;">3.374,80</div>
<div class="c" style="left:423.15px;top:541.69px;letter-spacing:-0.055px;">COF<span class="I">I</span>NS</div>
<div class="c" style="left:541.74px;top:541.69px;letter-spacing:-0.044px;">519.200,00</div>
<div class="c" style="left:648.04px;top:541.69px;letter-spacing:0.189px;max-width:54.96px;overflow:hidden;">15.576,00</div>
<div class="c" style="left:423.80px;top:563.69px;letter-spacing:-0.267px;"><span class="I">I</span>CMS</div>
<div class="c" style="left:541.74px;top:563.69px;letter-spacing:-0.044px;">519.200,00</div>
<div class="c" style="left:648.51px;top:563.69px;letter-spacing:0.130px;max-width:54.49px;overflow:hidden;">62.304,00</div>
<div class="h" style="left:423.80px;top:475.69px;letter-spacing:-0.283px;"><span class="I">I</span>mposto</div>
<div class="h" style="left:517.30px;top:475.69px;letter-spacing:-0.174px;">Base de cálculo</div>
<div class="h" style="left:618.15px;top:475.69px;letter-spacing:-0.344px;">Valor</div>
<svg class="ic" style="left:708px;top:503.500px" width="7" height="4" viewBox="0 0 7 4"><path d="M0 4h7L3.500 0z" fill="#a6a6a6"/></svg>
<svg class="ic" style="left:708px;top:570px" width="7" height="4" viewBox="0 0 7 4"><path d="M0 0h7L3.500 4z" fill="#a6a6a6"/></svg>
<div class="abs" style="left:703px;top:581px;width:17px;height:17px;background:#dcdcdc"></div>
<div class="abs" style="left:437px;top:583px;width:243px;height:13px;background:#c1c1c1"></div>
<svg class="ic" style="left:426px;top:586px" width="4" height="7" viewBox="0 0 4 7"><path d="M4 0V7L0 3.500z" fill="#a3a3a3"/></svg>
<svg class="ic" style="left:693px;top:586px" width="4" height="7" viewBox="0 0 4 7"><path d="M0 0V7L4 3.500z" fill="#404040"/></svg>
<div class="abs" style="left:0px;top:637px;width:1344px;height:3px;background:#d5d9ec"></div>
</div></body></html>
